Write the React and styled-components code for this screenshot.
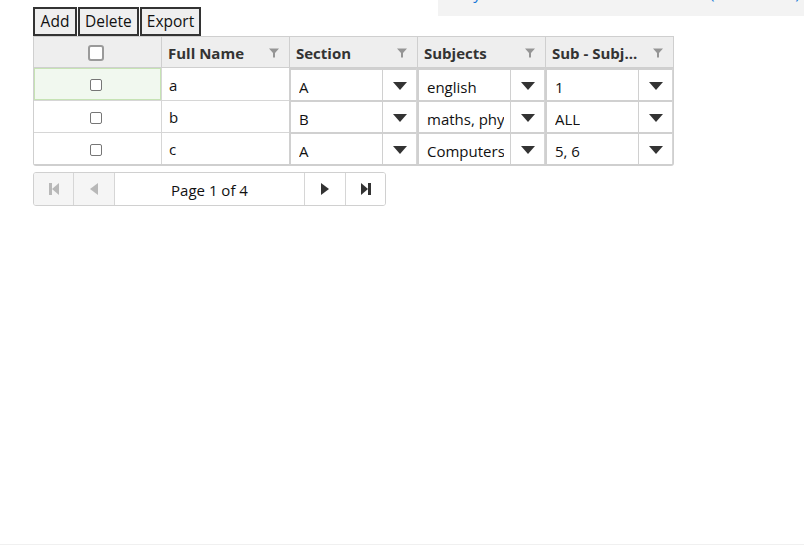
import React from "react";
import styled, { createGlobalStyle } from "styled-components";

const Global = createGlobalStyle`
  html, body { margin: 0; padding: 0; background: #fff; }
  body { font-family: "Open Sans", "Liberation Sans", sans-serif; color: #222; }
  #root { height: 545px; }
`;

const Page = styled.div`
  position: relative;
  height: 544px;
  border-bottom: 1px solid #f0f0f0;
  overflow: hidden;
`;

const TopStrip = styled.div`
  position: absolute;
  left: 438px;
  top: 0;
  width: 366px;
  height: 16px;
  background: #f3f3f3;
  overflow: hidden;
`;

const StripText = styled.div`
  position: absolute;
  left: 25px;
  right: 4px;
  top: -17px;
  display: flex;
  justify-content: space-between;
  font-size: 16px;
  line-height: 20px;
  color: #1a7bd8;
  white-space: nowrap;
`;

const Content = styled.div`
  padding: 7px 0 0 33px;
`;

const Toolbar = styled.div`
  display: flex;
`;

const ToolButton = styled.button`
  height: 29px;
  min-width: 44px;
  padding: 0 5px;
  margin: 0 1px 0 0;
  border: 2px solid #333;
  background: #efefef;
  font-family: "Open Sans", "Liberation Sans", sans-serif;
  font-size: 15.5px;
  color: #111;
  line-height: 1;
`;

const Grid = styled.div`
  width: fit-content;
  border: 1px solid #cfcfcf;
  border-bottom-width: 2px;
  border-radius: 0 0 3px 3px;
  display: grid;
  grid-template-columns: 127px 128px 128px 128px 128px;
  background: #fff;
`;

const HeadCell = styled.div`
  height: 31px;
  background: #eeeeee;
  border-bottom: 1px solid #cfcfcf;
  border-left: ${(p) => (p.first ? "none" : "1px solid #cfcfcf")};
  display: flex;
  align-items: center;
  justify-content: ${(p) => (p.center ? "center" : "space-between")};
  padding: ${(p) => (p.center ? "2px 4px 0 0" : "2px 10px 0 6px")};
  font-weight: 700;
  font-size: 15px;
  color: #333;
  box-sizing: border-box;
  white-space: nowrap;
`;

const Cell = styled.div`
  height: 32px;
  box-sizing: border-box;
  border-top: ${(p) => (p.firstRow ? "none" : "1px solid #d6d6d6")};
  border-left: ${(p) => (p.first ? "none" : "1px solid #d6d6d6")};
  display: flex;
  align-items: center;
  justify-content: ${(p) => (p.center ? "center" : "flex-start")};
  padding: ${(p) => (p.center ? "2px 4px 0 0" : "1px 0 0 7px")};
  font-size: 15px;
  color: #111;
  background: ${(p) => (p.active ? "#f1f8ef" : "#fff")};
  outline: ${(p) => (p.active ? "1px solid #c6e3b4" : "none")};
  outline-offset: -1px;
`;

const EditorCell = styled.div`
  height: 32px;
  box-sizing: border-box;
  border-left: 2px solid #d0d0d0;
  border-top: 2px solid #d0d0d0;
  border-right: 1px solid #d6d6d6;
  display: flex;
  align-items: stretch;
  background: #fff;
`;

const EditorText = styled.div`
  flex: 1;
  min-width: 0;
  padding: 3px 6px 0 8px;
  display: flex;
  align-items: center;
`;

const EditorValue = styled.span`
  display: block;
  overflow: hidden;
  white-space: nowrap;
  font-size: 15px;
  color: #111;
`;

const EditorArrow = styled.div`
  width: 33px;
  flex: none;
  border-left: 1px solid #d0d0d0;
  display: flex;
  align-items: center;
  justify-content: center;
  padding-top: 1px;
`;

const HeaderBox = styled.div`
  width: 16px;
  height: 16px;
  box-sizing: border-box;
  border: 2px solid #9a9a9a;
  border-radius: 3px;
  background: #fff;
`;

const RowBox = styled.div`
  width: 12px;
  height: 12px;
  box-sizing: border-box;
  border: 1px solid #767676;
  border-radius: 2px;
  background: #fff;
`;

const Pager = styled.div`
  margin-top: 6px;
  width: 353px;
  height: 34px;
  box-sizing: border-box;
  border: 1px solid #d0d0d0;
  border-radius: 3px;
  display: flex;
  overflow: hidden;
`;

const PagerButton = styled.div`
  width: ${(p) => p.w}px;
  box-sizing: border-box;
  flex: none;
  display: flex;
  align-items: center;
  justify-content: center;
  background: ${(p) => (p.disabled ? "#f5f5f5" : "#fff")};
  border-left: ${(p) => (p.first ? "none" : "1px solid #d6d6d6")};
`;

const PageInfo = styled.div`
  flex: 1;
  display: flex;
  align-items: center;
  justify-content: center;
  border-left: 1px solid #d6d6d6;
  font-size: 15px;
  color: #111;
  padding-top: 1px;
`;

const Funnel = () => (
  <svg width="10" height="10" viewBox="0 0 10 10">
    <path d="M0 0.5 H10 L6 5 V9.5 H4 V5 Z" fill="#959595" />
  </svg>
);

const Caret = () => (
  <svg width="14" height="8" viewBox="0 0 14 8">
    <path d="M0 0 H14 L7 8 Z" fill="#333" />
  </svg>
);

const First = ({ c }) => (
  <svg width="12" height="12" viewBox="0 0 12 12">
    <rect x="1" y="0" width="3" height="12" fill={c} />
    <path d="M11 0 V12 L4 6 Z" fill={c} />
  </svg>
);
const Prev = ({ c }) => (
  <svg width="8" height="12" viewBox="0 0 8 12">
    <path d="M8 0 V12 L0 6 Z" fill={c} />
  </svg>
);
const Next = ({ c }) => (
  <svg width="8" height="12" viewBox="0 0 8 12">
    <path d="M0 0 V12 L8 6 Z" fill={c} />
  </svg>
);
const Last = ({ c }) => (
  <svg width="12" height="12" viewBox="0 0 12 12">
    <path d="M1 0 V12 L8 6 Z" fill={c} />
    <rect x="8" y="0" width="3" height="12" fill={c} />
  </svg>
);

const rows = [
  { name: "a", section: "A", subjects: "english", sub: "1" },
  { name: "b", section: "B", subjects: "maths, physics", sub: "ALL" },
  { name: "c", section: "A", subjects: "Computers, science", sub: "5, 6" },
];

const headers = ["Full Name", "Section", "Subjects", "Sub - Subj..."];

export default function App() {
  return (
    <>
      <Global />
      <Page>
        <TopStrip>
          <StripText>
            <span>By section</span>
            <span>(total count)</span>
          </StripText>
        </TopStrip>
        <Content>
          <Toolbar>
            <ToolButton>Add</ToolButton>
            <ToolButton>Delete</ToolButton>
            <ToolButton>Export</ToolButton>
          </Toolbar>
          <Grid>
            <HeadCell first center>
              <HeaderBox />
            </HeadCell>
            {headers.map((h) => (
              <HeadCell key={h}>
                <span>{h}</span>
                <Funnel />
              </HeadCell>
            ))}
            {rows.map((r, i) => (
              <React.Fragment key={r.name}>
                <Cell first center firstRow={i === 0} active={i === 0}>
                  <RowBox />
                </Cell>
                <Cell firstRow={i === 0}>{r.name}</Cell>
                {[r.section, r.subjects, r.sub].map((v, j) => (
                  <EditorCell key={j}>
                    <EditorText>
                      <EditorValue>{v}</EditorValue>
                    </EditorText>
                    <EditorArrow>
                      <Caret />
                    </EditorArrow>
                  </EditorCell>
                ))}
              </React.Fragment>
            ))}
          </Grid>
          <Pager>
            <PagerButton w={39} first disabled>
              <First c="#b8b8b8" />
            </PagerButton>
            <PagerButton w={41} disabled>
              <Prev c="#b8b8b8" />
            </PagerButton>
            <PageInfo>Page 1 of 4</PageInfo>
            <PagerButton w={41}>
              <Next c="#333" />
            </PagerButton>
            <PagerButton w={40}>
              <Last c="#333" />
            </PagerButton>
          </Pager>
        </Content>
      </Page>
    </>
  );
}
